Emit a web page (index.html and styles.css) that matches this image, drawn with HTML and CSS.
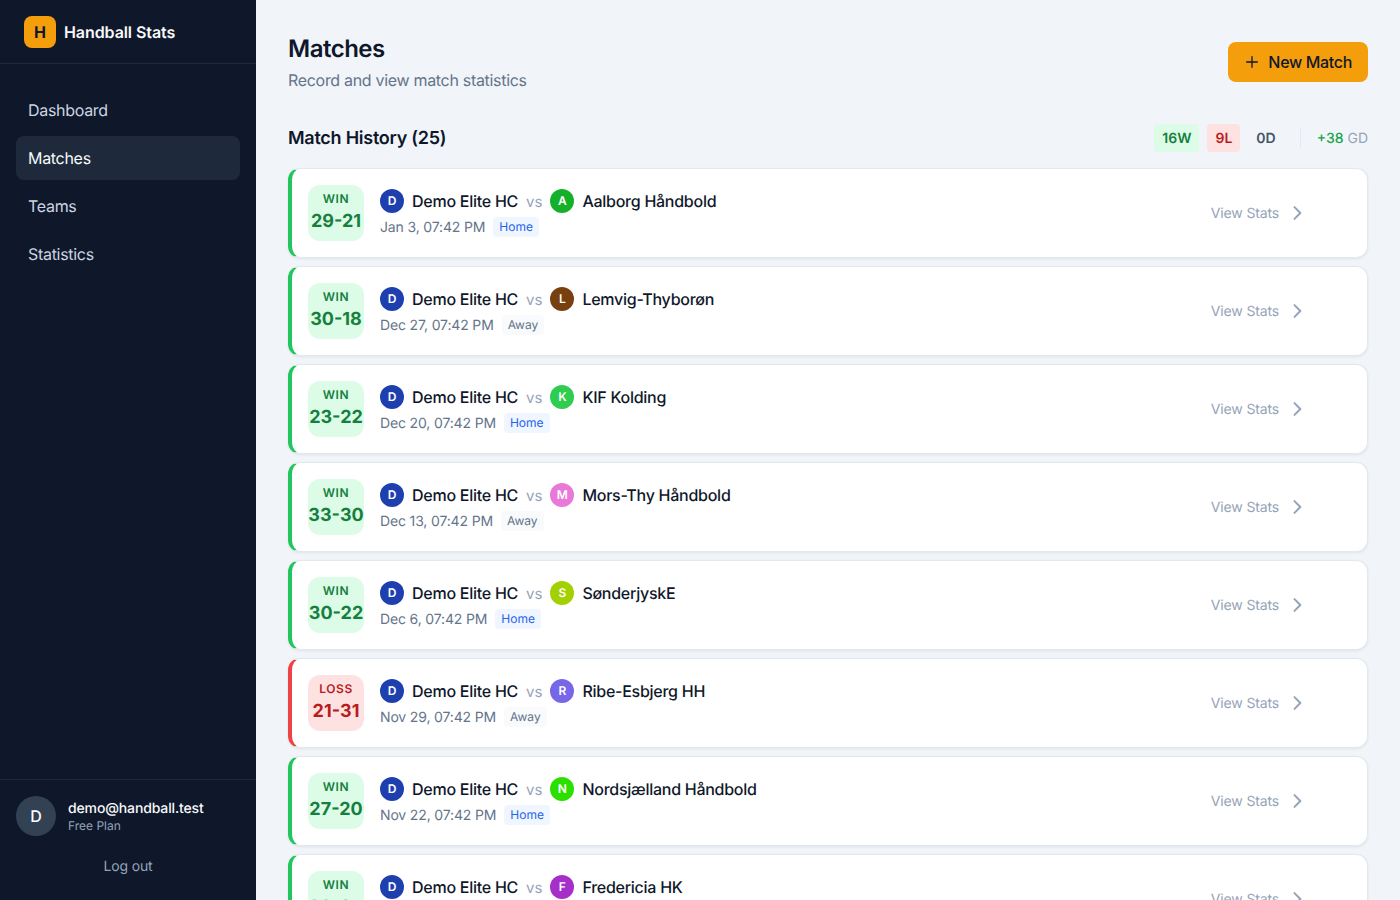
FILE: index.html
```html
<!DOCTYPE html>
<html lang="en">
<head>
    <meta charset="UTF-8">
    <meta name="viewport" content="width=device-width, initial-scale=1.0">
    <title>Matches - Handball Stats</title>
    <link rel="stylesheet" href="styles.css">
</head>
<body>
    <aside class="sidebar">
        <div class="brand">
            <div class="brand-logo">H</div>
            <span class="brand-name">Handball Stats</span>
        </div>
        <nav class="nav">
            <a class="nav-item" href="#">Dashboard</a>
            <a class="nav-item active" href="#">Matches</a>
            <a class="nav-item" href="#">Teams</a>
            <a class="nav-item" href="#">Statistics</a>
        </nav>
        <div class="account">
            <div class="account-user">
                <div class="account-avatar">D</div>
                <div>
                    <div class="account-email">demo@handball.test</div>
                    <div class="account-plan">Free Plan</div>
                </div>
            </div>
            <a class="logout" href="#">Log out</a>
        </div>
    </aside>

    <main class="main">
        <header class="page-header">
            <div>
                <h1>Matches</h1>
                <p>Record and view match statistics</p>
            </div>
            <button class="new-match" type="button">
                <svg width="16" height="16" viewBox="0 0 24 24" fill="none" stroke="currentColor" stroke-width="2" stroke-linecap="round"><path d="M12 4v16M4 12h16"/></svg>
                New Match
            </button>
        </header>

        <div class="history-header">
            <h2>Match History (25)</h2>
            <div class="summary">
                <span class="pill pill-win">16W</span>
                <span class="pill pill-loss">9L</span>
                <span class="pill pill-draw">0D</span>
                <span class="summary-divider"></span>
                <span class="goal-diff"><b>+38</b> GD</span>
            </div>
        </div>

        <div class="match-list">
            <article class="match win">
                <div class="score"><span class="score-label">WIN</span><span class="score-value">29-21</span></div>
                <div class="match-info">
                    <div class="teams"><span class="crest crest-demo">D</span><span class="team">Demo Elite HC</span><span class="vs">vs</span><span class="crest crest-a">A</span><span class="team">Aalborg Håndbold</span></div>
                    <div class="meta"><span>Jan 3, 07:42 PM</span><span class="venue home">Home</span></div>
                </div>
                <a class="view-stats" href="#">View Stats<svg width="20" height="20" viewBox="0 0 24 24" fill="none" stroke="currentColor" stroke-width="2.4" stroke-linecap="round" stroke-linejoin="round"><path d="M9 5l7 7-7 7"/></svg></a>
            </article>
            <article class="match win">
                <div class="score"><span class="score-label">WIN</span><span class="score-value">30-18</span></div>
                <div class="match-info">
                    <div class="teams"><span class="crest crest-demo">D</span><span class="team">Demo Elite HC</span><span class="vs">vs</span><span class="crest crest-l">L</span><span class="team">Lemvig-Thyborøn</span></div>
                    <div class="meta"><span>Dec 27, 07:42 PM</span><span class="venue away">Away</span></div>
                </div>
                <a class="view-stats" href="#">View Stats<svg width="20" height="20" viewBox="0 0 24 24" fill="none" stroke="currentColor" stroke-width="2.4" stroke-linecap="round" stroke-linejoin="round"><path d="M9 5l7 7-7 7"/></svg></a>
            </article>
            <article class="match win">
                <div class="score"><span class="score-label">WIN</span><span class="score-value">23-22</span></div>
                <div class="match-info">
                    <div class="teams"><span class="crest crest-demo">D</span><span class="team">Demo Elite HC</span><span class="vs">vs</span><span class="crest crest-k">K</span><span class="team">KIF Kolding</span></div>
                    <div class="meta"><span>Dec 20, 07:42 PM</span><span class="venue home">Home</span></div>
                </div>
                <a class="view-stats" href="#">View Stats<svg width="20" height="20" viewBox="0 0 24 24" fill="none" stroke="currentColor" stroke-width="2.4" stroke-linecap="round" stroke-linejoin="round"><path d="M9 5l7 7-7 7"/></svg></a>
            </article>
            <article class="match win">
                <div class="score"><span class="score-label">WIN</span><span class="score-value">33-30</span></div>
                <div class="match-info">
                    <div class="teams"><span class="crest crest-demo">D</span><span class="team">Demo Elite HC</span><span class="vs">vs</span><span class="crest crest-m">M</span><span class="team">Mors-Thy Håndbold</span></div>
                    <div class="meta"><span>Dec 13, 07:42 PM</span><span class="venue away">Away</span></div>
                </div>
                <a class="view-stats" href="#">View Stats<svg width="20" height="20" viewBox="0 0 24 24" fill="none" stroke="currentColor" stroke-width="2.4" stroke-linecap="round" stroke-linejoin="round"><path d="M9 5l7 7-7 7"/></svg></a>
            </article>
            <article class="match win">
                <div class="score"><span class="score-label">WIN</span><span class="score-value">30-22</span></div>
                <div class="match-info">
                    <div class="teams"><span class="crest crest-demo">D</span><span class="team">Demo Elite HC</span><span class="vs">vs</span><span class="crest crest-s">S</span><span class="team">SønderjyskE</span></div>
                    <div class="meta"><span>Dec 6, 07:42 PM</span><span class="venue home">Home</span></div>
                </div>
                <a class="view-stats" href="#">View Stats<svg width="20" height="20" viewBox="0 0 24 24" fill="none" stroke="currentColor" stroke-width="2.4" stroke-linecap="round" stroke-linejoin="round"><path d="M9 5l7 7-7 7"/></svg></a>
            </article>
            <article class="match loss">
                <div class="score"><span class="score-label">LOSS</span><span class="score-value">21-31</span></div>
                <div class="match-info">
                    <div class="teams"><span class="crest crest-demo">D</span><span class="team">Demo Elite HC</span><span class="vs">vs</span><span class="crest crest-r">R</span><span class="team">Ribe-Esbjerg HH</span></div>
                    <div class="meta"><span>Nov 29, 07:42 PM</span><span class="venue away">Away</span></div>
                </div>
                <a class="view-stats" href="#">View Stats<svg width="20" height="20" viewBox="0 0 24 24" fill="none" stroke="currentColor" stroke-width="2.4" stroke-linecap="round" stroke-linejoin="round"><path d="M9 5l7 7-7 7"/></svg></a>
            </article>
            <article class="match win">
                <div class="score"><span class="score-label">WIN</span><span class="score-value">27-20</span></div>
                <div class="match-info">
                    <div class="teams"><span class="crest crest-demo">D</span><span class="team">Demo Elite HC</span><span class="vs">vs</span><span class="crest crest-n">N</span><span class="team">Nordsjælland Håndbold</span></div>
                    <div class="meta"><span>Nov 22, 07:42 PM</span><span class="venue home">Home</span></div>
                </div>
                <a class="view-stats" href="#">View Stats<svg width="20" height="20" viewBox="0 0 24 24" fill="none" stroke="currentColor" stroke-width="2.4" stroke-linecap="round" stroke-linejoin="round"><path d="M9 5l7 7-7 7"/></svg></a>
            </article>
            <article class="match win">
                <div class="score"><span class="score-label">WIN</span><span class="score-value">28-24</span></div>
                <div class="match-info">
                    <div class="teams"><span class="crest crest-demo">D</span><span class="team">Demo Elite HC</span><span class="vs">vs</span><span class="crest crest-f">F</span><span class="team">Fredericia HK</span></div>
                    <div class="meta"><span>Nov 15, 07:42 PM</span><span class="venue away">Away</span></div>
                </div>
                <a class="view-stats" href="#">View Stats<svg width="20" height="20" viewBox="0 0 24 24" fill="none" stroke="currentColor" stroke-width="2.4" stroke-linecap="round" stroke-linejoin="round"><path d="M9 5l7 7-7 7"/></svg></a>
            </article>
        </div>
    </main>
</body>
</html>
```

FILE: styles.css
```css
* {
    box-sizing: border-box;
}
html, body {
    height: 100%;
}
body {
    margin: 0;
    display: flex;
    overflow: hidden;
    background: #f1f5f9;
    color: #0f172a;
    font-family: Inter, "Liberation Sans", sans-serif;
    text-rendering: geometricPrecision;
}
a {
    color: inherit;
    text-decoration: none;
}

/* sidebar */
.sidebar {
    width: 256px;
    flex-shrink: 0;
    height: 100%;
    display: flex;
    flex-direction: column;
    background: #0f172a;
}
.brand {
    height: 64px;
    display: flex;
    align-items: center;
    gap: 8px;
    padding: 0 24px;
    border-bottom: 1px solid #1e293b;
}
.brand-logo {
    width: 32px;
    height: 32px;
    display: flex;
    align-items: center;
    justify-content: center;
    border-radius: 8px;
    background: #f59e0b;
    color: #0f172a;
    font-size: 16px;
    font-weight: 700;
}
.brand-name {
    color: #f8fafc;
    font-size: 16px;
    font-weight: 600;
    letter-spacing: -0.08px;
}
.nav {
    flex: 1;
    display: flex;
    flex-direction: column;
    gap: 4px;
    padding: 24px 16px;
}
.nav-item {
    height: 44px;
    display: flex;
    align-items: center;
    padding: 0 12px;
    border-radius: 8px;
    color: #cbd5e1;
    font-size: 16px;
    letter-spacing: -0.3px;
}
.nav-item.active {
    background: #1e293b;
    color: #f8fafc;
}
.account {
    padding: 16px 16px 15px;
    border-top: 1px solid #1e293b;
}
.account-user {
    display: flex;
    align-items: center;
    gap: 12px;
}
.account-avatar {
    width: 40px;
    height: 40px;
    display: flex;
    align-items: center;
    justify-content: center;
    border-radius: 50%;
    background: #334155;
    color: #f8fafc;
    font-size: 16px;
    font-weight: 500;
}
.account-email {
    margin: 1px 0 -1px;
    color: #f8fafc;
    font-size: 14px;
    font-weight: 500;
    line-height: 20px;
    letter-spacing: -0.14px;
}
.account-plan {
    color: #94a3b8;
    font-size: 12px;
    line-height: 16px;
}
.logout {
    display: block;
    margin-top: 13px;
    padding: 8px 0;
    color: #94a3b8;
    font-size: 14px;
    line-height: 20px;
    text-align: center;
    letter-spacing: -0.15px;
}

/* main */
.main {
    flex: 1;
    min-width: 0;
    height: 100%;
    overflow: hidden;
    padding: 32px;
}
.page-header {
    display: flex;
    justify-content: space-between;
    align-items: center;
    margin-bottom: 32px;
}
.page-header h1 {
    margin: 1px 0 3px;
    font-size: 24px;
    font-weight: 600;
    line-height: 32px;
    letter-spacing: -0.5px;
}
.page-header p {
    margin: 0;
    color: #64748b;
    font-size: 16px;
    line-height: 24px;
    letter-spacing: -0.31px;
}
.new-match {
    height: 40px;
    display: flex;
    align-items: center;
    gap: 8px;
    padding: 0 16px;
    border: 0;
    border-radius: 8px;
    background: #f59e0b;
    color: #0f172a;
    font-family: inherit;
    font-size: 16px;
    font-weight: 500;
    letter-spacing: -0.33px;
}
.history-header {
    display: flex;
    justify-content: space-between;
    align-items: center;
    height: 28px;
    margin-bottom: 16px;
}
.history-header h2 {
    margin: 2px 0 0;
    font-size: 18px;
    font-weight: 600;
    line-height: 28px;
    letter-spacing: -0.25px;
}
.summary {
    display: flex;
    align-items: center;
    gap: 8px;
    font-size: 14px;
}
.pill {
    height: 28px;
    display: flex;
    align-items: center;
    padding: 0 8px;
    border-radius: 4px;
    font-weight: 600;
}
.pill-win {
    background: #dcfce7;
    color: #15803d;
}
.pill-loss {
    background: #fee2e2;
    color: #b91c1c;
}
.pill-draw {
    color: #475569;
}
.summary-divider {
    width: 1px;
    height: 20px;
    margin: 0 8px;
    background: #e2e8f0;
}
.goal-diff {
    color: #94a3b8;
}
.goal-diff b {
    color: #16a34a;
    font-weight: 500;
}

/* match cards */
.match-list {
    display: flex;
    flex-direction: column;
    gap: 8px;
}
.match {
    height: 90px;
    flex-shrink: 0;
    display: flex;
    align-items: center;
    gap: 16px;
    padding: 16px 60px 16px 16px;
    border: 1px solid #e2e8f0;
    border-left-width: 4px;
    border-radius: 12px;
    background: #fff;
    box-shadow: 0 1px 3px rgba(15, 23, 42, 0.08);
}
.match.win {
    border-left-color: #22c55e;
}
.match.loss {
    border-left-color: #ef4444;
}
.score {
    width: 56px;
    height: 56px;
    flex-shrink: 0;
    display: flex;
    flex-direction: column;
    align-items: center;
    justify-content: center;
    border-radius: 12px;
}
.win .score {
    background: #dcfce7;
    color: #15803d;
}
.loss .score {
    background: #fee2e2;
    color: #b91c1c;
}
.score-label {
    font-size: 12px;
    font-weight: 600;
    line-height: 16px;
    letter-spacing: 0.6px;
}
.score-value {
    margin: 1px 0 -1px;
    font-size: 18px;
    font-weight: 700;
    line-height: 28px;
    white-space: nowrap;
}
.match-info {
    flex: 1;
    min-width: 0;
}
.teams {
    display: flex;
    align-items: center;
    gap: 8px;
    margin-top: 1px;
}
.crest {
    width: 24px;
    height: 24px;
    display: flex;
    align-items: center;
    justify-content: center;
    padding-bottom: 1px;
    border-radius: 50%;
    color: #fff;
    font-size: 12px;
    font-weight: 600;
}
.crest-demo { background: #1e40af; }
.crest-a { background: #15b02a; }
.crest-l { background: #78400f; }
.crest-k { background: #2ecc4f; }
.crest-m { background: #e879d9; }
.crest-s { background: #a3d000; }
.crest-r { background: #7866e8; }
.crest-n { background: #2be000; }
.crest-f { background: #a52fc8; }
.team {
    font-size: 16px;
    font-weight: 500;
    line-height: 24px;
    letter-spacing: -0.26px;
}
.vs {
    color: #94a3b8;
    font-size: 15px;
}
.meta {
    display: flex;
    align-items: center;
    gap: 8px;
    margin-top: 5px;
    color: #64748b;
    font-size: 14px;
    line-height: 20px;
    letter-spacing: -0.15px;
}
.venue {
    margin-top: -2px;
    padding: 2px 6px;
    border-radius: 4px;
    font-size: 12px;
    line-height: 16px;
    letter-spacing: 0;
}
.venue.home {
    background: #eff6ff;
    color: #2563eb;
}
.venue.away {
    background: #f8fafc;
    color: #64748b;
}
.view-stats {
    display: flex;
    align-items: center;
    gap: 8px;
    color: #94a3b8;
    font-size: 14px;
    letter-spacing: -0.15px;
}
```
